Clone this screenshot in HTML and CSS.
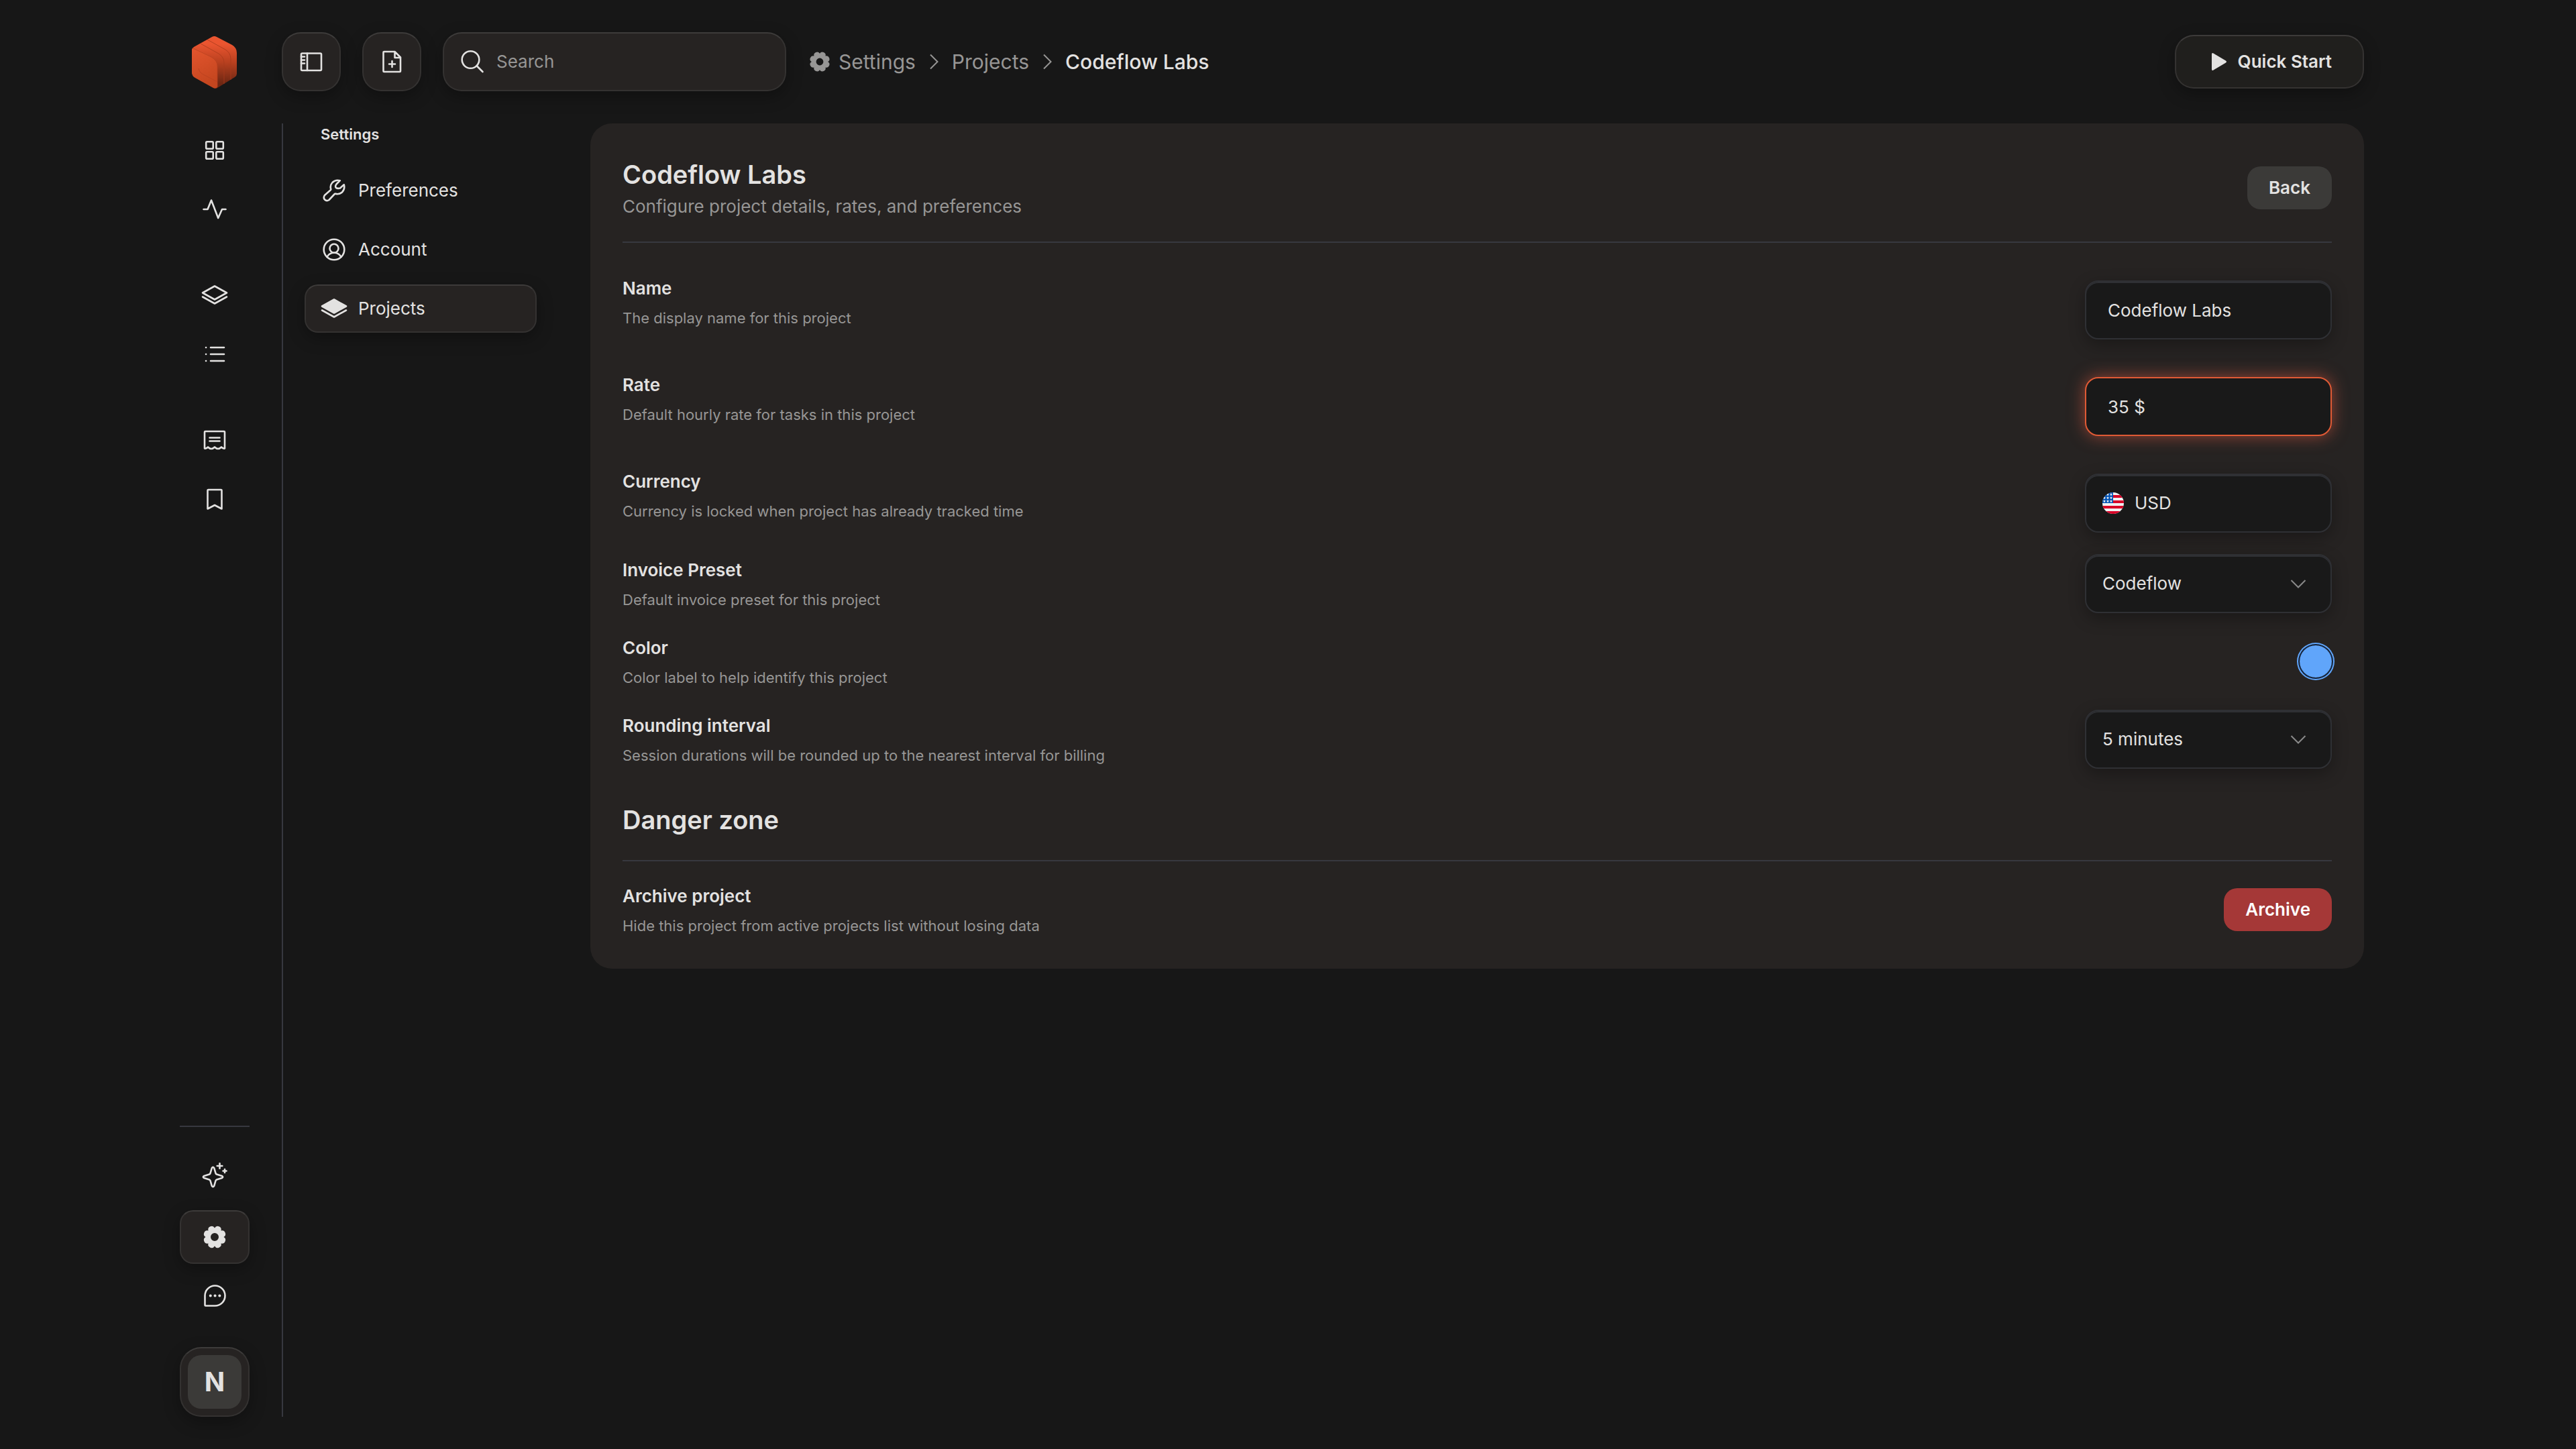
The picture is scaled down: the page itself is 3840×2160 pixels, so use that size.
FILE: index.html
```html
<!DOCTYPE html>
<html lang="en">
<head>
    <meta charset="UTF-8">
    <meta name="viewport" content="width=device-width, initial-scale=1.0">
    <title>Codeflow Labs - Settings</title>
    <link rel="stylesheet" href="styles.css">
</head>
<body>
    <!-- Icons used more than once -->
    <svg class="sprite" aria-hidden="true">
        <symbol id="gear" viewBox="0 0 40 40">
            <path fill="currentColor" fill-rule="evenodd" d="M33.5 20A5.2 5.2 0 0 1 29.5 29.5A5.2 5.2 0 0 1 20 33.5A5.2 5.2 0 0 1 10.5 29.5A5.2 5.2 0 0 1 6.500 20A5.2 5.2 0 0 1 10.5 10.5A5.2 5.2 0 0 1 20 6.500A5.2 5.2 0 0 1 29.5 10.5A5.2 5.2 0 0 1 33.5 20ZM20 14a6 6 0 1 0 0 12a6 6 0 1 0 0 -12Z"/>
        </symbol>
        <symbol id="chevron-right" viewBox="0 0 16 32">
            <path fill="none" stroke="currentColor" stroke-width="2" d="M2 5.5L12.5 16L2 26.5"/>
        </symbol>
        <symbol id="chevron-down" viewBox="0 0 32 32">
            <path fill="none" stroke="currentColor" stroke-width="2" d="M5.5 11L16 21.5L26.5 11"/>
        </symbol>
        <symbol id="star" viewBox="0 0 10 10" width="4" height="4">
            <path fill="#f0f0f0" d="M5 0L6.500 3.300L10 3.800L7.500 6.200L8.100 10L5 8.100L1.900 10L2.500 6.200L0 3.800L3.500 3.300Z"/>
        </symbol>
    </svg>

    <div class="app">
        <header class="topbar">
            <a class="logo" href="#" aria-label="Home">
                <svg viewBox="0 0 100 100">
                    <defs>
                        <linearGradient id="side" x1="0" y1="0" x2="0" y2="1">
                            <stop offset="0.15" stop-color="#ea5530"/>
                            <stop offset="0.5" stop-color="#b8401f"/>
                            <stop offset="0.9" stop-color="#6e2713"/>
                        </linearGradient>
                        <linearGradient id="front" x1="0" y1="0" x2="0.3" y2="1">
                            <stop offset="0" stop-color="#e4552e"/>
                            <stop offset="1" stop-color="#c4461f"/>
                        </linearGradient>
                    </defs>
                    <path fill="url(#side)" d="M46 13Q49.500 11 53 13L76 25Q83 29 83 37V68Q83 71 80 73L54 89Q51 91 48 89L21 74Q16 71 16 66V33Q16 30 19 28Z"/>
                    <path fill="none" stroke="#a83a1c" stroke-width="0.8" d="M39 17L66 32Q74 37 74 46V77M29 23L56 38Q64 43 64 52V83"/>
                    <path fill="url(#front)" d="M16 33Q16 28 21 30L45 43Q54 48 54 57V86Q54 91 48 89L21 74Q16 71 16 66Z"/>
                    <path fill="none" stroke="#b8401f" stroke-width="0.8" d="M18 30L45 43Q54 48 54 57V88M26 60Q27 66 33 69L54 80"/>
                </svg>
            </a>
            <button class="icon-button" type="button" aria-label="Toggle sidebar">
                <svg class="icon" viewBox="0 0 40 40"><rect x="5" y="7.500" width="30" height="25.500" rx="1.500"/><path d="M14 7.500V33M5 12.500h5M5 17.500h5M5 22.500h5"/></svg>
            </button>
            <button class="icon-button" type="button" aria-label="New file">
                <svg class="icon" viewBox="0 0 40 40"><path d="M8.500 5H24.500L33 13.500V34Q33 35 32 35H8.500Q7.500 35 7.500 34V6Q7.500 5 8.500 5ZM24.500 5V14H33M20.500 19v9M16 23.500h9"/></svg>
            </button>
            <label class="search">
                <svg class="icon" viewBox="0 0 40 40"><circle cx="17.500" cy="17" r="12.800"/><path d="M26.500 26L35.500 35"/></svg>
                <input type="search" placeholder="Search" aria-label="Search">
            </label>
            <nav class="breadcrumb" aria-label="Breadcrumb">
                <svg class="crumb-gear"><use href="#gear"/></svg>
                <a href="#">Settings</a>
                <svg class="crumb-arrow"><use href="#chevron-right"/></svg>
                <a href="#">Projects</a>
                <svg class="crumb-arrow"><use href="#chevron-right"/></svg>
                <a class="current" href="#">Codeflow Labs</a>
            </nav>
            <button class="quick-start" type="button">
                <svg class="play" viewBox="0 0 24 28"><path fill="currentColor" d="M1 3Q1 0 3.500 1.500L22 12.500Q24 14 22 15.500L3.500 26.500Q1 28 1 25Z"/></svg>
                Quick Start
            </button>
        </header>

        <div class="body">
            <aside class="sidebar">
                <nav class="rail">
                    <a href="#" aria-label="Dashboard"><svg class="icon" viewBox="0 0 40 40"><rect x="7.200" y="7.200" width="10.500" height="10.500" rx="1.500"/><rect x="22.300" y="7.200" width="10.500" height="10.500" rx="1.500"/><rect x="7.200" y="22.300" width="10.500" height="10.500" rx="1.500"/><rect x="22.300" y="22.300" width="10.500" height="10.500" rx="1.500"/></svg></a>
                    <a href="#" aria-label="Activity"><svg class="icon" viewBox="0 0 40 40"><path d="M3.500 20H9.500L15 6.500L25.200 33L31 20H36.500"/></svg></a>
                    <a class="group" href="#" aria-label="Projects"><svg class="icon" viewBox="0 0 40 40"><path d="M20 6.500L38 16.500L20 26.500L2 16.500ZM2 22.500L20 32.500L38 22.500"/></svg></a>
                    <a href="#" aria-label="Tasks"><svg class="icon" viewBox="0 0 40 40"><path d="M14 10H34M14 20H34M14 30H34M7 10h0.100M7 20h0.100M7 30h0.100"/></svg></a>
                    <a class="group" href="#" aria-label="Invoices"><svg class="icon" viewBox="0 0 40 40"><path d="M5 32.500V8Q5 7 6 7H34Q35 7 35 8V32.500Q32.500 33 30 30.500Q27.500 33 25 33Q22.500 33 20 30.500Q17.500 33 15 33Q12.500 33 10 30.500Q7.500 33 5 32.500ZM12.500 16.500H27.500M12.500 21.500H27.500"/></svg></a>
                    <a href="#" aria-label="Bookmarks"><svg class="icon" viewBox="0 0 40 40"><path d="M10.500 6H29.500Q30.500 6 30.500 7V34.500L20 29L9.500 34.500V7Q9.500 6 10.500 6Z"/></svg></a>
                </nav>
                <nav class="rail rail-bottom">
                    <a href="#" aria-label="Assistant"><svg class="icon" viewBox="0 0 40 40"><path d="M15.800 5.200Q17.500 2.500 19.200 5.200L21.500 13Q22 14.200 23 14.600L30.800 17Q33.500 18.500 30.800 20L23 22.400Q22 22.800 21.500 24L19.200 31.800Q17.500 34.500 15.800 31.800L13.500 24Q13 22.800 12 22.400L4.200 20Q1.500 18.500 4.200 17L12 14.600Q13 14.200 13.500 13ZM27.500 -1.800v7.600M23.700 2h7.600M35 7v5M32.500 9.500h5"/></svg></a>
                    <a class="active" href="#" aria-label="Settings"><svg class="icon"><use href="#gear"/></svg></a>
                    <a href="#" aria-label="Feedback"><svg class="icon" viewBox="0 0 40 40"><path d="M20.500 4.500a15 15 0 0 1 0 30H6.500Q5.500 34.500 5.500 33.500V19.500a15 15 0 0 1 15 -15Z"/><path class="dots" d="M13.700 19.500h0.100M20.500 19.500h0.100M27.300 19.500h0.100"/></svg></a>
                    <button class="avatar" type="button"><span>N</span></button>
                </nav>
            </aside>

            <div class="content">
                <nav class="subnav">
                    <h2>Settings</h2>
                    <a href="#"><svg class="icon" viewBox="0 0 40 40"><path d="M28.800 5.200Q22 3.500 17.500 8Q13.500 12.500 15.300 18.200Q15.300 19 14.500 19.500L6 27Q3.500 30.500 6 33.500Q9 36.500 12.500 34L20.500 25.500Q21 24.700 22 24.800Q27.500 26.500 32 22.500Q36.500 18 34.800 11.200L29 16.500Q24 17.500 22.500 15.500Q21.500 13 23.500 10.500Z"/></svg>Preferences</a>
                    <a href="#"><svg class="icon" viewBox="0 0 40 40"><circle cx="20" cy="20" r="15.300"/><circle cx="20" cy="18.200" r="6.500"/><path d="M9.500 31Q13 24.800 20 24.800Q27 24.800 30.500 31"/></svg>Account</a>
                    <a class="active" href="#"><svg class="icon" viewBox="0 0 40 40"><path fill="currentColor" d="M20 6.500L38 16.500L20 26.500L2 16.500Z"/><path d="M2 22.500L20 32.500L38 22.500"/></svg>Projects</a>
                </nav>

                <main class="panel">
                    <div class="panel-header">
                        <div>
                            <h1>Codeflow Labs</h1>
                            <p>Configure project details, rates, and preferences</p>
                        </div>
                        <button class="button" type="button">Back</button>
                    </div>

                    <form class="rows">
                        <div class="row">
                            <div class="info">
                                <label for="name">Name</label>
                                <p>The display name for this project</p>
                            </div>
                            <div class="control spaced">
                                <input class="field" id="name" type="text" value="Codeflow Labs">
                            </div>
                        </div>
                        <div class="row">
                            <div class="info">
                                <label for="rate">Rate</label>
                                <p>Default hourly rate for tasks in this project</p>
                            </div>
                            <div class="control spaced">
                                <input class="field focused" id="rate" type="text" value="35 $">
                            </div>
                        </div>
                        <div class="row">
                            <div class="info">
                                <label for="currency">Currency</label>
                                <p>Currency is locked when project has already tracked time</p>
                            </div>
                            <div class="control spaced">
                                <select class="field with-flag" id="currency" disabled>
                                    <option>USD</option>
                                </select>
                                <svg class="flag" viewBox="0 0 32 32">
                                    <clipPath id="round"><circle cx="16" cy="16" r="16"/></clipPath>
                                    <g clip-path="url(#round)">
                                        <rect width="32" height="32" fill="#f0f0f0"/>
                                        <path fill="#d80027" d="M16 4h16v4H16zM16 12h16v4H16zM0 20h32v4H0zM0 28h32v4H0z"/>
                                        <rect width="16" height="16" fill="#0052b4"/>
                                        <use href="#star" x="6" y="1"/>
                                        <use href="#star" x="11" y="1"/>
                                        <use href="#star" x="1" y="6"/>
                                        <use href="#star" x="6" y="6"/>
                                        <use href="#star" x="11" y="6"/>
                                        <use href="#star" x="1" y="11"/>
                                        <use href="#star" x="6" y="11"/>
                                        <use href="#star" x="11" y="11"/>
                                    </g>
                                </svg>
                            </div>
                        </div>
                        <div class="row">
                            <div class="info">
                                <label for="preset">Invoice Preset</label>
                                <p>Default invoice preset for this project</p>
                            </div>
                            <div class="control">
                                <select class="field" id="preset">
                                    <option>Codeflow</option>
                                </select>
                                <svg class="arrow"><use href="#chevron-down"/></svg>
                            </div>
                        </div>
                        <div class="row">
                            <div class="info">
                                <label for="color">Color</label>
                                <p>Color label to help identify this project</p>
                            </div>
                            <input class="swatch" id="color" type="color" value="#60a5fa">
                        </div>
                        <div class="row">
                            <div class="info">
                                <label for="rounding">Rounding interval</label>
                                <p>Session durations will be rounded up to the nearest interval for billing</p>
                            </div>
                            <div class="control">
                                <select class="field" id="rounding">
                                    <option>5 minutes</option>
                                </select>
                                <svg class="arrow"><use href="#chevron-down"/></svg>
                            </div>
                        </div>
                    </form>

                    <h2 class="danger-title">Danger zone</h2>
                    <div class="row">
                        <div class="info">
                            <h3>Archive project</h3>
                            <p>Hide this project from active projects list without losing data</p>
                        </div>
                        <button class="button danger" type="button">Archive</button>
                    </div>
                </main>
            </div>
        </div>
    </div>
</body>
</html>
```

FILE: styles.css
```css
:root {
    --bg: #171717;
    --surface: #262322;
    --edge: #343231;
    --edge-top: #3d3b3a;
    --line: #37383f;
    --text: #e3e2e1;
    --muted: #979695;
    --accent: #e05a35;
    --shadow: 0 8px 24px rgba(0, 0, 0, 0.3);
}

* {
    box-sizing: border-box;
}

body {
    margin: 0;
    background-color: var(--bg);
    color: var(--text);
    font-family: Inter, "Noto Sans", sans-serif;
    font-size: 26px;
    line-height: 40px;
}

h1, h2, h3, p {
    margin: 0;
}

a {
    color: inherit;
    text-decoration: none;
}

button, input, select {
    font: inherit;
    color: inherit;
}

button {
    cursor: pointer;
}

.sprite {
    display: none;
}

.icon {
    width: 40px;
    height: 40px;
    flex: none;
    overflow: visible;
    fill: none;
    stroke: currentColor;
    stroke-width: 2.6px;
    stroke-linecap: round;
    stroke-linejoin: round;
}

.icon use {
    stroke: none;
}

.app {
    display: flex;
    flex-direction: column;
    gap: 48px;
    min-height: 100vh;
    padding: 48px 316px 48px 268px;
}

/* Top bar */
.topbar {
    display: flex;
    align-items: center;
    height: 88px;
}

.logo {
    display: flex;
    justify-content: center;
    width: 104px;
    margin-right: 48px;
}

.logo svg {
    width: 100px;
    height: 100px;
}

.icon-button,
.search,
.quick-start,
.avatar,
.rail .active,
.subnav .active {
    background-color: var(--surface);
    border: 2px solid var(--edge);
    border-top-color: var(--edge-top);
    box-shadow: var(--shadow);
}

.icon-button {
    display: flex;
    align-items: center;
    justify-content: center;
    width: 88px;
    height: 88px;
    padding: 0;
    margin-right: 32px;
    border-radius: 28px;
}

.search {
    display: flex;
    align-items: center;
    gap: 16px;
    width: 512px;
    height: 88px;
    padding: 0 22px;
    border-radius: 28px;
}

.search input {
    flex: 1;
    min-width: 0;
    padding: 0;
    background: none;
    border: none;
    outline: none;
}

.search input::placeholder {
    color: var(--muted);
    opacity: 1;
}

.breadcrumb {
    display: flex;
    align-items: center;
    margin-left: 32px;
    font-size: 30px;
    color: var(--muted);
}

.crumb-gear {
    width: 36px;
    height: 36px;
    margin-right: 10px;
}

.crumb-arrow {
    width: 16px;
    height: 32px;
    margin: 0 18px 0 20px;
}

.breadcrumb .current {
    color: var(--text);
    font-weight: 500;
}

.quick-start {
    display: flex;
    align-items: center;
    gap: 16px;
    height: 80px;
    margin-left: auto;
    padding: 0 46px 0 52px;
    background-color: #201f1d;
    border-radius: 28px;
    font-weight: 600;
}

.play {
    width: 24px;
    height: 28px;
}

/* Layout under the top bar */
.body {
    display: flex;
    flex: 1;
    gap: 48px;
}

.sidebar {
    display: flex;
    flex-direction: column;
    justify-content: space-between;
    width: 104px;
}

.rail {
    display: flex;
    flex-direction: column;
    gap: 8px;
}

.rail a {
    display: flex;
    align-items: center;
    justify-content: center;
    height: 80px;
    border-radius: 20px;
}

.rail .group {
    margin-top: 40px;
}

.rail-bottom {
    padding-top: 36px;
    border-top: 2px solid var(--line);
}

.dots {
    stroke-width: 4px;
}

.avatar {
    display: flex;
    align-items: center;
    justify-content: center;
    height: 104px;
    margin-top: 28px;
    padding: 0;
    border-radius: 32px;
}

.avatar span {
    width: 80px;
    height: 80px;
    background-color: #3b3a38;
    border-radius: 20px;
    font-size: 40px;
    font-weight: 700;
    line-height: 80px;
}

.content {
    display: flex;
    flex: 1;
    align-items: flex-start;
    align-self: stretch;
    gap: 80px;
    padding-left: 32px;
    border-left: 2px solid var(--line);
}

.content > * {
    min-width: 0;
}

/* Settings menu */
.subnav {
    display: flex;
    flex: none;
    flex-direction: column;
    gap: 16px;
    width: 346px;
}

.subnav h2 {
    padding: 0 24px;
    margin-bottom: 16px;
    font-size: 22px;
    font-weight: 600;
    line-height: 32px;
}

.subnav a {
    display: flex;
    align-items: center;
    gap: 16px;
    height: 72px;
    padding: 0 22px;
    border: 2px solid transparent;
    border-radius: 20px;
}

/* Project panel */
.panel {
    flex: 1;
    padding: 48px;
    background-color: var(--surface);
    border-radius: 32px;
}

.panel-header {
    display: flex;
    align-items: center;
    justify-content: space-between;
    padding-bottom: 32px;
    border-bottom: 2px solid var(--line);
}

.panel-header p {
    color: var(--muted);
}

h1,
.danger-title {
    font-size: 38px;
    font-weight: 600;
    line-height: 56px;
}

.button {
    height: 64px;
    padding: 0 32px;
    background-color: #3b3a38;
    border: none;
    border-radius: 20px;
    font-weight: 600;
}

.rows {
    display: flex;
    flex-direction: column;
    gap: 32px;
    padding-top: 32px;
}

.row {
    display: flex;
    align-items: center;
    justify-content: space-between;
}

.info label,
.info h3 {
    display: block;
    margin-bottom: 8px;
    font-size: 26px;
    font-weight: 600;
    line-height: 40px;
}

.info p {
    color: var(--muted);
    font-size: 22px;
    line-height: 32px;
}

.control {
    position: relative;
    width: 368px;
}

.spaced {
    padding-top: 24px;
}

.field {
    display: block;
    width: 100%;
    height: 88px;
    padding: 0 32px;
    background-color: #191919;
    border: 2px solid #2f3034;
    border-radius: 20px;
    outline: none;
    box-shadow: inset 0 2px 0 #2f3034, var(--shadow);
    appearance: none;
}

select.field {
    padding: 0 24px;
    opacity: 1;
}

select.with-flag {
    padding-left: 72px;
}

.field.focused {
    border-color: var(--accent);
    box-shadow: 0 0 24px rgba(224, 90, 65, 0.6);
}

.flag,
.arrow {
    position: absolute;
    width: 32px;
    height: 32px;
    bottom: 28px;
    pointer-events: none;
}

.flag {
    left: 26px;
}

.arrow {
    right: 34px;
    color: #8a8a8a;
}

.swatch {
    width: 48px;
    height: 48px;
    padding: 0;
    background: none;
    border: none;
    border-radius: 50%;
    box-shadow: 0 0 0 2px #14233a, 0 0 0 4px #60a5fa;
    appearance: none;
}

.swatch::-webkit-color-swatch-wrapper {
    padding: 0;
}

.swatch::-webkit-color-swatch {
    border: none;
    border-radius: 50%;
}

.danger-title {
    padding-bottom: 32px;
    margin: 48px 0 32px;
    border-bottom: 2px solid var(--line);
}

.button.danger {
    background-color: #a53837;
    color: #fff;
}
```
